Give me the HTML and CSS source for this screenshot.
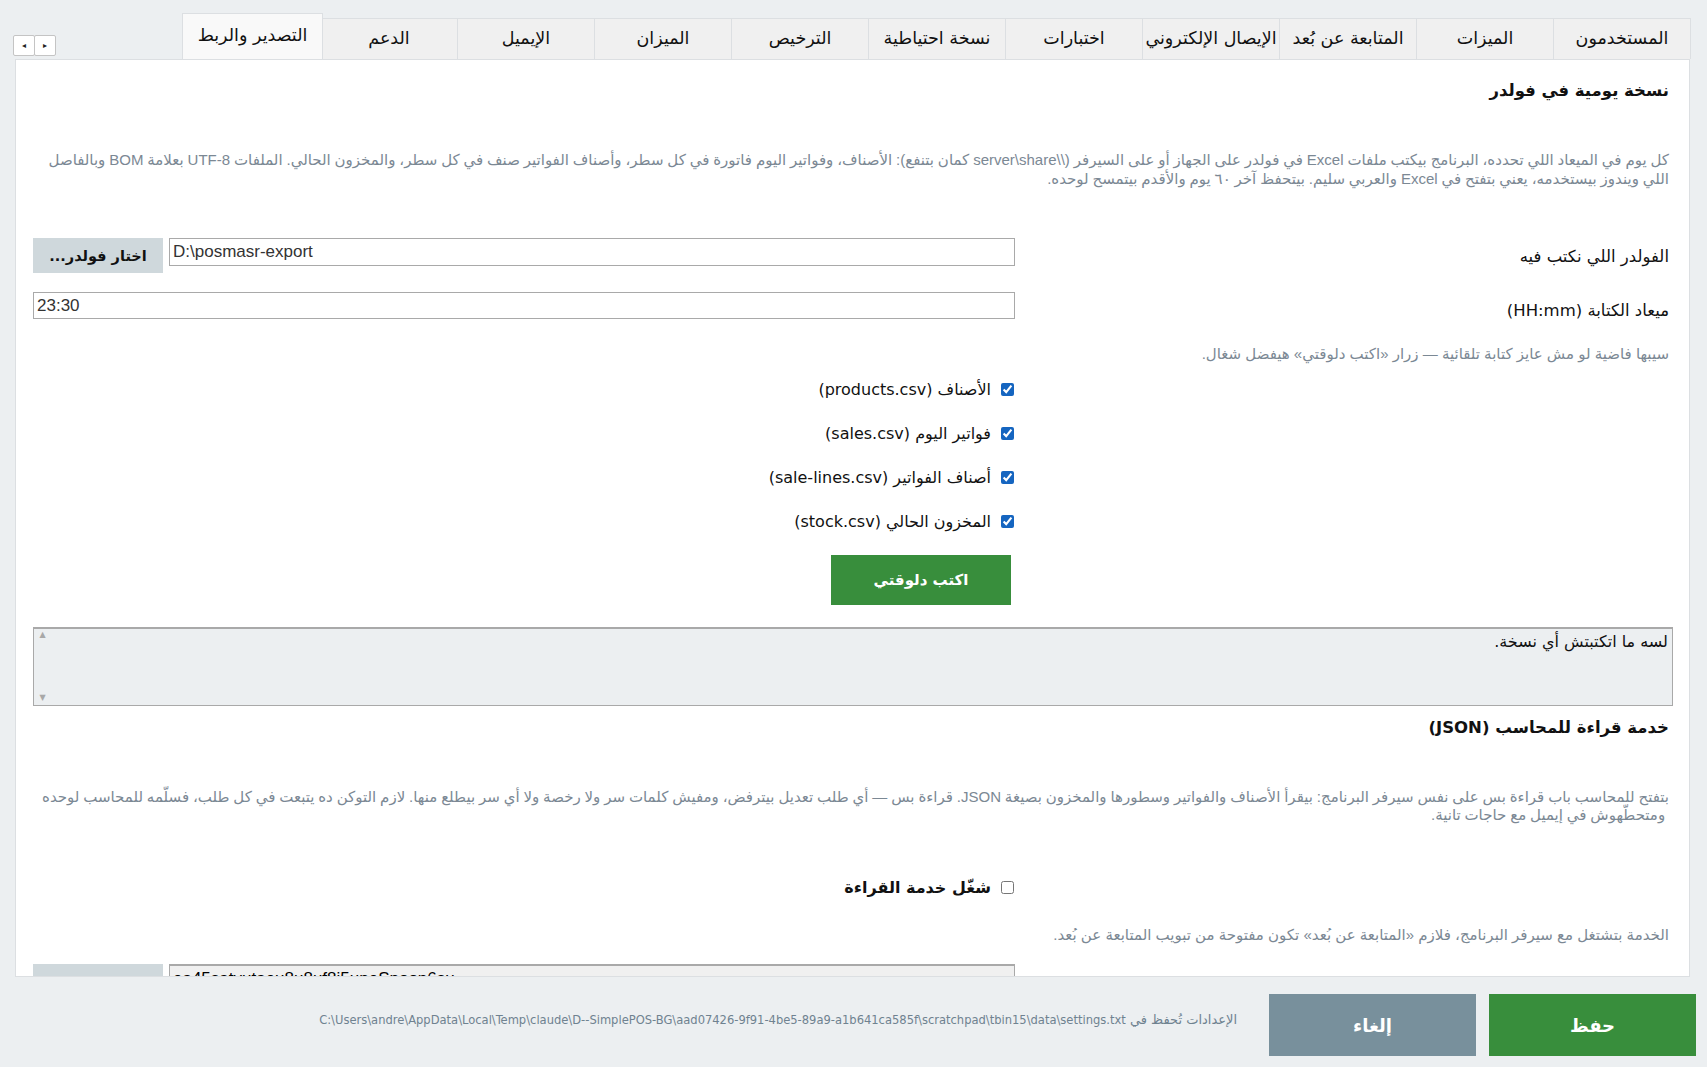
FILE: index.html
```html
<!DOCTYPE html>
<html lang="ar" dir="rtl">
<head>
    <meta charset="UTF-8">
    <title>الإعدادات</title>
    <link rel="stylesheet" href="styles.css">
</head>
<body>

    <div class="tabbar">
        <div class="tabs">
            <div class="tab">المستخدمون</div>
            <div class="tab">الميزات</div>
            <div class="tab">المتابعة عن بُعد</div>
            <div class="tab">الإيصال الإلكتروني</div>
            <div class="tab">اختبارات</div>
            <div class="tab">نسخة احتياطية</div>
            <div class="tab">الترخيص</div>
            <div class="tab">الميزان</div>
            <div class="tab">الإيميل</div>
            <div class="tab">الدعم</div>
            <div class="tab active">التصدير والربط</div>
        </div>
        <div class="tab-scroll">
            <div class="tab-scroll-btn">&#9656;</div>
            <div class="tab-scroll-btn">&#9666;</div>
        </div>
    </div>

    <div class="panel">
        <h2 class="section-title">نسخة يومية في فولدر</h2>
        <p class="section-desc">كل يوم في الميعاد اللي تحدده، البرنامج بيكتب ملفات Excel في فولدر على الجهاز أو على السيرفر (\\server\share كمان بتنفع): الأصناف، وفواتير اليوم فاتورة في كل سطر، وأصناف الفواتير صنف في كل سطر، والمخزون الحالي. الملفات UTF-8 بعلامة BOM وبالفاصل<br>اللي ويندوز بيستخدمه، يعني بتفتح في Excel والعربي سليم. بيتحفظ آخر ٦٠ يوم والأقدم بيتمسح لوحده.</p>

        <div class="field-row first">
            <div class="field-label">الفولدر اللي نكتب فيه</div>
            <div class="field-control">
                <div class="text-input">D:\posmasr-export</div>
                <button class="btn-browse">اختار فولدر...</button>
            </div>
        </div>

        <div class="field-row time">
            <div class="field-label">ميعاد الكتابة (HH:mm)</div>
            <div class="field-control">
                <div class="text-input short">23:30</div>
            </div>
        </div>

        <p class="hint">سيبها فاضية لو مش عايز كتابة تلقائية — زرار «اكتب دلوقتي» هيفضل شغال.</p>

        <div class="checks">
            <label class="check"><input type="checkbox" checked> الأصناف (products.csv)</label>
            <label class="check"><input type="checkbox" checked> فواتير اليوم (sales.csv)</label>
            <label class="check"><input type="checkbox" checked> أصناف الفواتير (sale-lines.csv)</label>
            <label class="check"><input type="checkbox" checked> المخزون الحالي (stock.csv)</label>
        </div>

        <div class="action-row">
            <button class="btn-green">اكتب دلوقتي</button>
        </div>

        <div class="log">
            <div class="log-text">لسه ما اتكتبتش أي نسخة.</div>
            <div class="log-scroll">
                <span>&#9650;</span>
                <span>&#9660;</span>
            </div>
        </div>

        <h2 class="section-title second">خدمة قراءة للمحاسب (JSON)</h2>
        <p class="section-desc">بتفتح للمحاسب باب قراءة بس على نفس سيرفر البرنامج: بيقرأ الأصناف والفواتير وسطورها والمخزون بصيغة JSON. قراءة بس — أي طلب تعديل بيترفض، ومفيش كلمات سر ولا رخصة ولا أي سر بيطلع منها. لازم التوكن ده يتبعت في كل طلب، فسلّمه للمحاسب لوحده<br>&nbsp;ومتحطّهوش في إيميل مع حاجات تانية.</p>

        <div class="checks service">
            <label class="check bold"><input type="checkbox"> شغّل خدمة القراءة</label>
        </div>

        <p class="hint service">الخدمة بتشتغل مع سيرفر البرنامج، فلازم «المتابعة عن بُعد» تكون مفتوحة من تبويب المتابعة عن بُعد.</p>

        <div class="field-row token">
            <div class="field-label"></div>
            <div class="field-control">
                <div class="text-input readonly">ea45satvutaeu8u8uf8i5uneSnoon6su</div>
                <button class="btn-browse"></button>
            </div>
        </div>
    </div>

    <div class="footer">
        <button class="btn-save">حفظ</button>
        <button class="btn-cancel">إلغاء</button>
        <div class="settings-path">الإعدادات تُحفظ في <span class="path-file">C:\Users\andre\AppData\Local\Temp\claude\D--SimplePOS-BG\aad07426-9f91-4be5-89a9-a1b641ca585f\scratchpad\tbin15\data\settings.txt</span></div>
    </div>

</body>
</html>
```

FILE: styles.css
```css
/* Settings window - export tab */
:root {
    --page-bg: #eceff1;
    --tab-bg: #f0f0f0;
    --tab-border: #dcdfe2;
    --text-dark: #111111;
    --text-muted: #7b8894;
    --green: #388e3c;
    --slate: #78909c;
    --button-grey: #cfd8dc;
    --field-border: #a9a9a9;
    --muted-font: "Liberation Sans", "DejaVu Sans", sans-serif;
    --narrow-font: "DejaVu Sans Condensed", "DejaVu Sans", sans-serif;
}

* {
    box-sizing: border-box;
}

body {
    margin: 0;
    width: 1707px;
    height: 1067px;
    overflow: hidden;
    display: flex;
    flex-direction: column;
    background-color: var(--page-bg);
    font-family: "DejaVu Sans", sans-serif;
    color: var(--text-dark);
}

button {
    font-family: inherit;
    cursor: pointer;
}

/* Tab strip */
.tabbar {
    height: 59px;
    flex: none;
    display: flex;
    align-items: flex-end;
    padding: 0 16px 0 14px;
}

.tabs {
    display: flex;
    align-items: flex-end;
}

.tab {
    width: 138px;
    height: 41px;
    margin-left: -1px;
    padding-bottom: 2px;
    display: flex;
    align-items: center;
    justify-content: center;
    background-color: var(--tab-bg);
    border: 1px solid var(--tab-border);
    border-bottom: none;
    font-size: 17.5px;
    white-space: nowrap;
}

.tab.active {
    width: 141px;
    height: 46px;
    margin-right: -2px;
    padding-bottom: 4px;
    background-color: #f9f9f9;
}

.tab-scroll {
    margin-right: auto;
    align-self: flex-start;
    margin-top: 35px;
    display: flex;
}

.tab-scroll-btn {
    width: 22px;
    height: 21px;
    margin-left: -1px;
    display: flex;
    align-items: center;
    justify-content: center;
    background-color: #ffffff;
    border: 1px solid #c4c4c4;
    border-radius: 2px;
    font-size: 8px;
    color: #222;
}

/* Main panel */
.panel {
    height: 918px;
    flex: none;
    margin: 0 17px 0 15px;
    padding: 20px 20px 0 17px;
    background-color: #ffffff;
    border: 1px solid var(--tab-border);
    overflow: hidden;
}

.section-title {
    margin: 0;
    font-size: 16.5px;
    line-height: 22px;
    font-weight: bold;
}

.section-title.second {
    margin-top: 11px;
}

.section-desc {
    margin: 49px 0 0;
    font-family: var(--muted-font);
    font-size: 15px;
    line-height: 18.5px;
    word-spacing: -0.3px;
    color: var(--text-muted);
}

.field-row {
    display: grid;
    grid-template-columns: 654px 1fr;
}

.field-row.first {
    margin-top: 50px;
}

.field-row.time {
    margin-top: 19px;
}

.field-row.token {
    margin-top: 20px;
}

.field-label {
    padding-top: 9px;
    line-height: 20px;
    font-size: 16.5px;
}

.field-control {
    display: flex;
    align-items: flex-start;
    gap: 6px;
}

.text-input {
    flex: 1;
    height: 28px;
    padding: 0 3px;
    direction: ltr;
    text-align: left;
    line-height: 26px;
    border: 1px solid var(--field-border);
    font-family: var(--muted-font);
    font-size: 17px;
    color: #333;
}

.text-input.short {
    height: 27px;
    line-height: 25px;
}

.text-input.readonly {
    background-color: #f0f0f0;
    border-top-width: 2px;
    color: #000;
}

.btn-browse {
    width: 130px;
    height: 35px;
    border: none;
    background-color: var(--button-grey);
    font-size: 14.5px;
    font-weight: bold;
    color: var(--text-dark);
}

.hint {
    margin: 24px 0 0;
    font-family: var(--muted-font);
    font-size: 15px;
    line-height: 18.5px;
    color: var(--text-muted);
}

.hint.service {
    margin-top: 16px;
}

/* Checkbox list sits in the control column */
.checks {
    margin: 4px 655px 0 0;
}

.checks.service {
    margin-top: 41px;
}

.check {
    height: 44px;
    display: flex;
    align-items: center;
    gap: 10px;
    font-size: 16px;
}

.check.bold {
    font-weight: bold;
}

.check input {
    width: 13px;
    height: 13px;
    margin: 0;
    accent-color: #1565c0;
}

.action-row {
    margin: 11px 658px 0 0;
}

.btn-green {
    width: 180px;
    height: 50px;
    border: none;
    background-color: var(--green);
    color: #ffffff;
    font-size: 15px;
    font-weight: bold;
}

/* Result log */
.log {
    height: 79px;
    margin: 22px -4px 0 0;
    display: flex;
    background-color: var(--page-bg);
    border: 1px solid var(--field-border);
    border-top-width: 2px;
}

.log-text {
    flex: 1;
    padding: 3px 4px;
    font-size: 16px;
    line-height: 20px;
}

.log-scroll {
    width: 17px;
    display: flex;
    flex-direction: column;
    justify-content: space-between;
    align-items: center;
    padding: 1px 0 3px;
    font-size: 8px;
    color: #a8a8a8;
}

/* Footer */
.footer {
    flex: 1;
    display: flex;
    align-items: flex-start;
    gap: 13px;
    padding: 17px 11px 0 0;
}

.btn-save,
.btn-cancel {
    width: 207px;
    height: 62px;
    border: none;
    color: #ffffff;
    font-size: 18px;
    font-weight: bold;
}

.btn-save {
    background-color: var(--green);
}

.btn-cancel {
    background-color: var(--slate);
}

.settings-path {
    margin: 17px 19px 0 0;
    font-size: 13px;
    line-height: 18px;
    color: #6f8290;
}

.path-file {
    font-family: var(--narrow-font);
    font-size: 12.8px;
}
```
